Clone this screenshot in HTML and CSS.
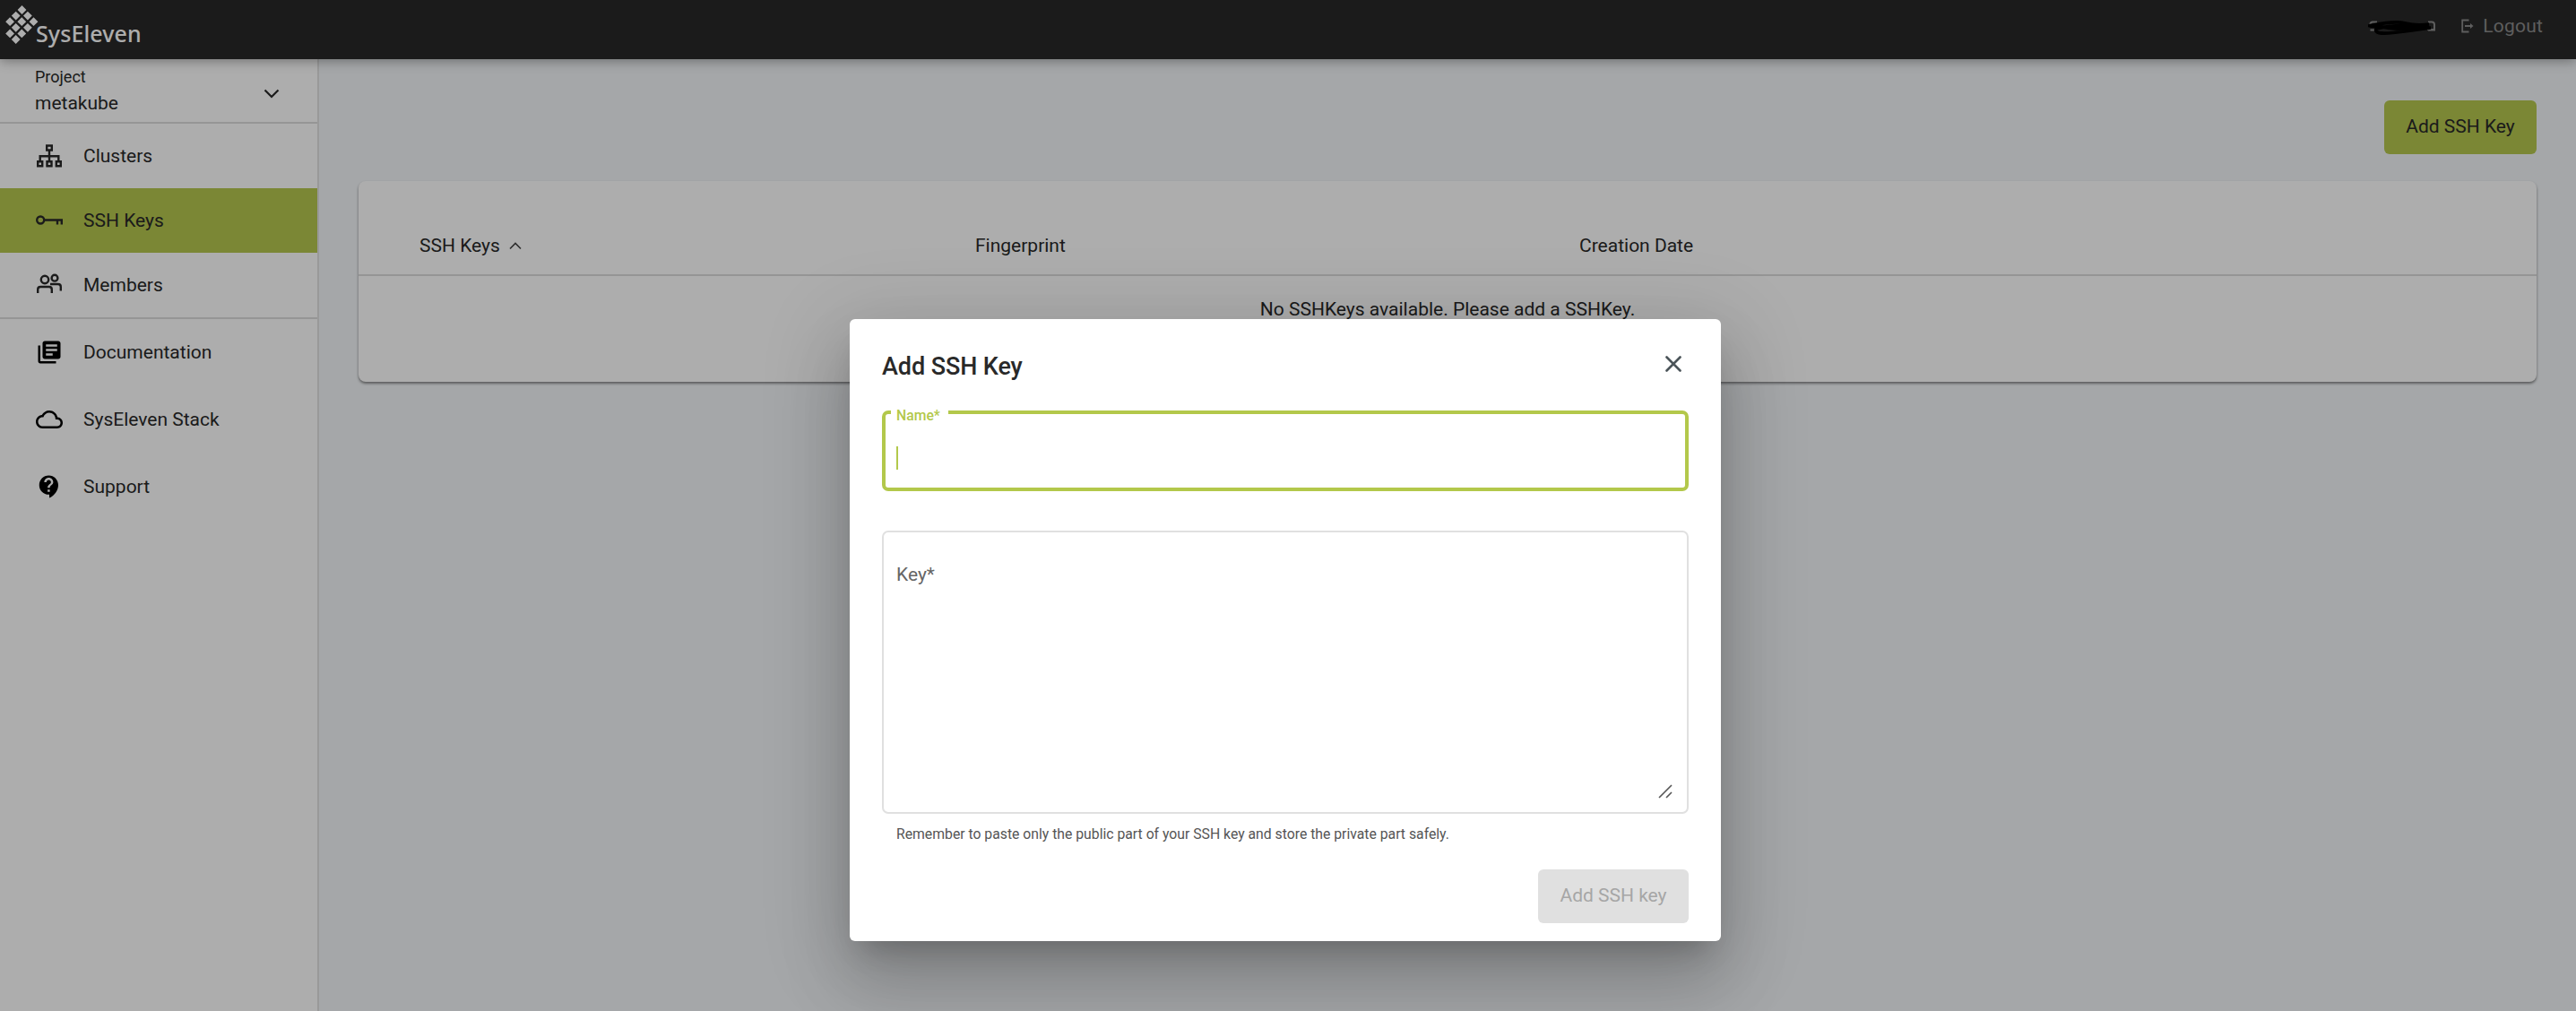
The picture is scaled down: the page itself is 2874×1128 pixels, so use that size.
FILE: index.html
```html
<!DOCTYPE html>
<html lang="en">
<head>
<meta charset="utf-8">
<title>SSH Keys</title>
<link rel="stylesheet" href="styles.css">
</head>
<body>
<div class="app">
  <header class="topbar">
    <div class="brand">
      <svg class="brand-mark" width="38" height="44" viewBox="0 0 38 44" fill="#fff">
        <path d="M18.500 0.100l4.900 4.900l-4.900 4.900l-4.900-4.900zM11.700 6.700l4.900 4.900l-4.900 4.900l-4.900-4.900zM24.900 6.700l4.900 4.900l-4.900 4.900l-4.900-4.900zM5.100 13.300l4.900 4.900l-4.900 4.900l-4.900-4.900zM18.300 13.300l4.900 4.900l-4.900 4.900l-4.900-4.900zM31.500 13.300l4.900 4.900l-4.900 4.900l-4.900-4.900zM11.700 19.900l4.900 4.900l-4.900 4.900l-4.900-4.900zM24.900 19.900l4.900 4.900l-4.900 4.900l-4.900-4.900zM5.100 26.500l4.900 4.900l-4.900 4.900l-4.900-4.900zM18.300 26.500l4.900 4.900l-4.900 4.900l-4.900-4.900zM11.700 33.100l4.900 4.900l-4.900 4.900l-4.900-4.900z"/>
      </svg>
      <span class="brand-name">SysEleven</span>
    </div>
    <div class="account">
      <svg class="redacted" width="76" height="22" viewBox="0 0 76 22" fill="none">
        <path d="M10 5.500H5Q2 6 2.500 9M2.500 14.500H9M67 5.500h4q3 0 3 3v6h-7M66 14h8" stroke="#8b8b8b" stroke-width="2"/>
        <path d="M6 9Q30 4 42 7T68 8Q50 12 20 11T8 9Q30 16 70 12Q50 15 28 17.500T9 13Q35 7 68 11" stroke="#000" stroke-width="3.600"/>
      </svg>
      <a class="logout"><svg width="14" height="16" viewBox="0 0 14 16" fill="none" stroke="#8b8b8b" stroke-width="1.800"><path d="M8.500 1.500H1.200V14.500H8.500M4 8h8"/><path d="M10 5l3.500 3-3.500 3z" fill="#8b8b8b" stroke="none"/></svg>Logout</a>
    </div>
  </header>
  <div class="body">
    <aside class="sidebar">
      <div class="project">
        <div><div class="project-label">Project</div><div class="project-name">metakube</div></div>
        <svg width="18" height="12" viewBox="0 0 18 12" fill="none" stroke="#292929" stroke-width="2.200"><path d="M1.500 1.500L9 9l7.500-7.500"/></svg>
      </div>
      <nav class="nav">
        <a class="item"><svg width="30" height="30" viewBox="0 0 30 30" fill="none" stroke="#292929" stroke-width="2.400"><path d="M12.200 3.500h5.600v5h-5.600zM2.200 21.200h5v5h-5zM12.500 21.200h5v5h-5zM22.800 21.200h5v5h-5zM15 8.500v12.500M4.700 21v-5.800h20.600V21"/></svg>Clusters</a>
        <a class="item active"><svg width="30" height="30" viewBox="0 0 30 30" fill="none" stroke="#292929" stroke-width="2.400"><circle cx="5.200" cy="14.500" r="4"/><path d="M9 14.500h19.800v5M24 14.500v5"/></svg>SSH Keys</a>
        <a class="item"><svg width="30" height="30" viewBox="0 0 30 30" fill="none" stroke="#292929" stroke-width="2.400"><circle cx="10" cy="9" r="4.200"/><circle cx="21" cy="7.200" r="3.400"/><path d="M2.200 24v-4q0-3 3-3h9.600q3 0 3 3v4M16 14h8.800q3 0 3 3v4.500"/></svg>Members</a>
      </nav>
      <nav class="links">
        <a class="item"><svg width="30" height="30" viewBox="0 0 24 24"><path fill="#000" d="M4 6H2v14c0 1.100.9 2 2 2h14v-2H4V6zm16-4H8c-1.100 0-2 .9-2 2v12c0 1.100.9 2 2 2h12c1.100 0 2-.9 2-2V4c0-1.100-.9-2-2-2zm-1 9H9V9h10v2zm-4 4H9v-2h6v2zm4-8H9V5h10v2z"/></svg>Documentation</a>
        <a class="item"><svg width="30" height="30" viewBox="0 0 24 24"><path fill="#000" d="M19.350 10.040C18.670 6.590 15.640 4 12 4 9.110 4 6.600 5.640 5.350 8.040 2.340 8.360 0 10.910 0 14c0 3.310 2.690 6 6 6h13c2.760 0 5-2.240 5-5 0-2.640-2.050-4.780-4.650-4.960zM19 18H6c-2.210 0-4-1.790-4-4s1.790-4 4-4h.71C7.370 7.690 9.480 6 12 6c3.040 0 5.500 2.460 5.500 5.500v.5H19c1.660 0 3 1.340 3 3s-1.340 3-3 3z"/></svg>SysEleven Stack</a>
        <a class="item"><svg width="30" height="30" viewBox="0 0 24 24"><path fill="#000" d="M11.500 2C6.810 2 3 5.810 3 10.500S6.810 19 11.500 19h.5v3c4.860-2.340 8-7 8-11.500C20 5.810 16.190 2 11.500 2zm1 14.500h-2v-2h2v2zm0-3.500h-2c0-3.250 3-3 3-5 0-1.100-.9-2-2-2s-2 .9-2 2h-2c0-2.210 1.790-4 4-4s4 1.790 4 4c0 2.500-3 2.750-3 5z"/></svg>Support</a>
      </nav>
    </aside>
    <main class="content">
      <div class="toolbar"><button class="primary">Add SSH Key</button></div>
      <section class="card">
        <div class="thead">
          <span>SSH Keys<svg width="14" height="9" viewBox="0 0 14 9" fill="none" stroke="#444" stroke-width="1.600"><path d="M1 7.500l6-6 6 6"/></svg></span>
          <span>Fingerprint</span>
          <span>Creation Date</span>
        </div>
        <div class="empty">No SSHKeys available. Please add a SSHKey.</div>
      </section>
    </main>
  </div>
</div>
<div class="backdrop">
  <div class="dialog">
    <div class="dialog-head">
      <h2>Add SSH Key</h2>
      <svg class="close" width="18" height="18" viewBox="0 0 18 18" fill="none" stroke="#4b5459" stroke-width="2.600" stroke-linecap="round"><path d="M1.500 1.500l15 15M16.500 1.500l-15 15"/></svg>
    </div>
    <div class="field name"><span class="float-label">Name*</span><i class="caret"></i></div>
    <div class="field key"><span>Key*</span>
      <svg class="grip" width="16" height="16" viewBox="0 0 16 16" fill="none" stroke="#555" stroke-width="1.600"><path d="M1 15L15 1M9 15l6-6"/></svg>
    </div>
    <p class="hint">Remember to paste only the public part of your SSH key and store the private part safely.</p>
    <div class="actions"><button class="disabled">Add SSH key</button></div>
  </div>
</div>
</body>
</html>
```
FILE: styles.css
```css
* { box-sizing: border-box; }
body { margin: 0; font-family: Roboto, sans-serif; font-size: 21px; color: #292929; overflow: hidden; }
svg { flex: none; display: block; }
button { font: inherit; border: 0; border-radius: 6px; height: 60px; padding: 0 0 2px; color: inherit; }
.app { height: 1128px; display: flex; flex-direction: column; background: #f3f6f9; }
.topbar { height: 66px; flex: none; background: #292929; display: flex; justify-content: space-between; padding: 0 37px 0 6px; box-shadow: 0 2px 12px rgba(0, 0, 0, .35); z-index: 1; }
.brand { display: flex; padding-top: 6px; color: #fff; }
.brand-name { font: 500 25px/32px "Noto Sans", sans-serif; padding-top: 15px; margin-left: -4px; letter-spacing: .1px; }
.account { display: flex; align-items: center; height: 57px; color: #8b8b8b; }
.redacted { margin: 3px 28px 0 0; }
.logout { display: flex; align-items: center; gap: 10px; letter-spacing: .2px; }
.body { flex: 1; display: flex; }
.sidebar { width: 356px; background: #fff; border-right: 2px solid #e2e2e2; }
.project { height: 72px; border-bottom: 2px solid #dcdcdc; display: flex; justify-content: space-between; padding: 6px 42px 0 39px; }
.project svg { margin-top: 27px; }
.project-label { font-size: 18px; line-height: 28px; }
.project-name { line-height: 30px; }
.nav { border-bottom: 2px solid #dcdcdc; }
.item { height: 72px; display: flex; align-items: center; gap: 23px; padding-left: 40px; }
.active { background: #b5c74e; }
.links { display: flex; flex-direction: column; gap: 3px; padding-top: 1px; }
.content { flex: 1; padding: 46px 44px 0; }
.toolbar { display: flex; justify-content: flex-end; margin-bottom: 30px; }
.primary { width: 170px; background: #b5c74e; }
.card { height: 224px; background: #fff; border-radius: 8px; box-shadow: 0 2px 3px rgba(0, 0, 0, .45); }
.thead { height: 106px; display: grid; grid-template-columns: 620px 674px 1fr; align-content: start; padding: 58px 0 0 68px; line-height: 28px; border-bottom: 2px solid #dcdcdc; }
.thead span { display: flex; align-items: center; gap: 10px; }
.empty { text-align: center; line-height: 28px; padding-top: 23px; }
.backdrop { position: absolute; inset: 0; z-index: 2; background: rgba(0, 0, 0, .32); padding: 356px 0 0 948px; }
.dialog { width: 972px; height: 694px; background: #fff; border-radius: 6px; padding: 36px 36px 20px; display: flex; flex-direction: column; box-shadow: 0 22px 30px -14px rgba(0, 0, 0, .2), 0 48px 76px 6px rgba(0, 0, 0, .14), 0 18px 92px 16px rgba(0, 0, 0, .12); }
.dialog-head { display: flex; justify-content: space-between; height: 66px; padding-right: 8px; }
.dialog-head h2 { margin: 0; font-size: 27px; line-height: 35px; font-weight: 500; letter-spacing: -.1px; }
.close { margin-top: 5px; }
.field { border-radius: 7px; position: relative; }
.name { height: 90px; border: 4px solid #b3c84b; padding: 36px 12px 0; }
.float-label { position: absolute; left: 6px; top: -8px; width: 64px; padding-left: 6px; background: #fff; color: #b3c84b; font-size: 15.75px; line-height: 20px; font-weight: 500; }
.caret { display: block; width: 2px; height: 26px; background: #b3c84b; }
.key { margin-top: 44px; height: 316px; border: 2px solid #e0e0e0; padding: 33px 14px; color: #666; line-height: 28px; }
.grip { position: absolute; right: 16px; bottom: 15px; }
.hint { margin: 12px 0 0 16px; font-size: 15.75px; line-height: 22px; color: #555; }
.actions { display: flex; justify-content: flex-end; margin-top: auto; }
.disabled { width: 168px; background: #e0e0e0; color: #a6a6a6; }
```
